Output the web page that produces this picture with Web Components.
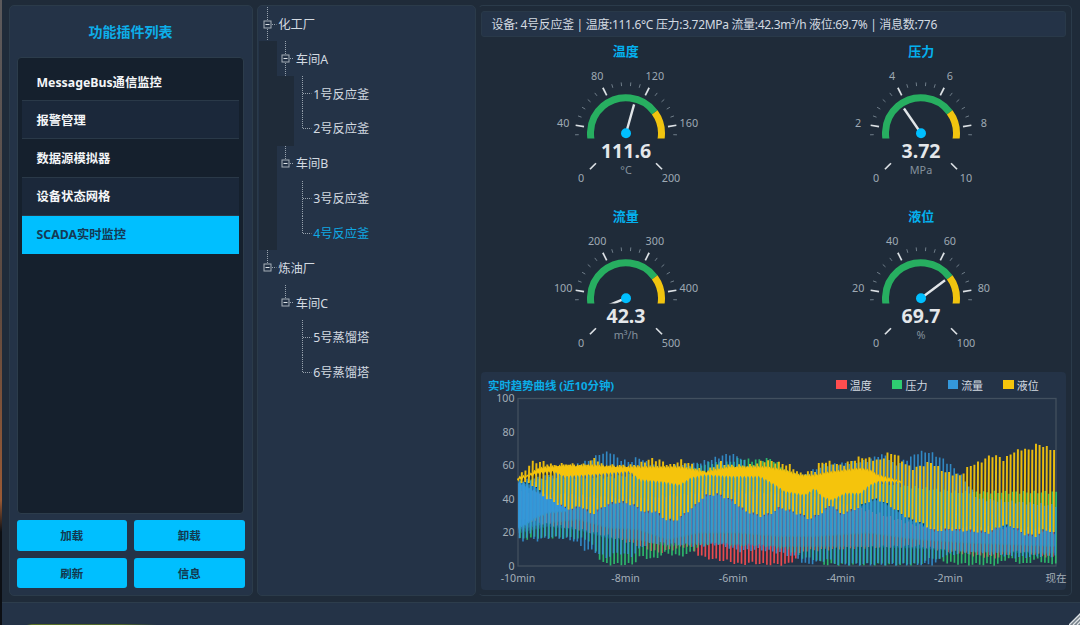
<!DOCTYPE html>
<html lang="zh-CN">
<head>
<meta charset="UTF-8">
<title>SCADA</title>
<style>
    * {
        box-sizing: border-box;
    }
    body {
        margin: 0;
        width: 1080px;
        height: 625px;
        overflow: hidden;
        background: #1f2b39;
        font-family: "Noto Sans", "Noto Sans CJK SC", sans-serif;
        font-size: 12px;
        color: #d3dae1;
    }
</style>
</head>
<body>
<scada-window>
    <plugin-panel slot="left" heading="功能插件列表">
        <plugin-item>MessageBus通信监控</plugin-item>
        <plugin-item alt>报警管理</plugin-item>
        <plugin-item>数据源模拟器</plugin-item>
        <plugin-item alt>设备状态网格</plugin-item>
        <plugin-item active>SCADA实时监控</plugin-item>
        <action-button slot="actions">加载</action-button>
        <action-button slot="actions">卸载</action-button>
        <action-button slot="actions">刷新</action-button>
        <action-button slot="actions">信息</action-button>
    </plugin-panel>
    <device-tree slot="tree"></device-tree>
    <monitor-view slot="main">
        <span slot="info">设备: 4号反应釜 | 温度:111.6°C 压力:3.72MPa 流量:42.3m³/h 液位:69.7% | 消息数:776</span>
        <gauge-dial label="温度" unit="°C" max="200" value="111.6"></gauge-dial>
        <gauge-dial label="压力" unit="MPa" max="10" value="3.72"></gauge-dial>
        <gauge-dial label="流量" unit="m³/h" max="500" value="42.3"></gauge-dial>
        <gauge-dial label="液位" unit="%" max="100" value="69.7"></gauge-dial>
        <trend-chart slot="chart"></trend-chart>
    </monitor-view>
</scada-window>

<script>
class ScadaWindow extends HTMLElement {
    constructor() {
        super();
        this.attachShadow({mode : "open"}).innerHTML = `
<style>
    * { box-sizing: border-box; }
    :host {
        display: grid;
        grid-template-rows: 602px 23px;
        width: 1080px;
        height: 625px;
        background: linear-gradient(#5c5a5c, #5d4a40 300px, #9a5a34 500px, #0c0f14 532px);
        padding-left: 1.5px;
    }
    .body {
        display: grid;
        grid-template-columns: 244px 219px 594px;
        column-gap: 4px;
        background: #1f2b39;
        padding: 5px 7px 6px 7px;
    }
    ::slotted([slot="main"]) { margin-left: -1.5px; margin-right: 1.5px; }
    .status {
        display: flex;
        justify-content: flex-end;
        align-items: flex-end;
        background: linear-gradient(90deg, transparent 25px, #586f25 30px, #4c632b 120px, transparent 155px) 0 100% / 100% 1px no-repeat, #243347;
        border-top: 1px solid #2d3d4c;
    }
    svg { display: block; }
</style>
<div class="body">
    <slot name="left"></slot>
    <slot name="tree"></slot>
    <slot name="main"></slot>
</div>
<div class="status">
    <svg width="12" height="12" viewBox="0 0 12 12">
        <path d="M0 12L12 0V12Z" fill="#75808a"/>
        <path d="M0 12L12 0M4 12L12 4M8 12L12 8" stroke="#dfe3e6" stroke-width="1.3"/>
    </svg>
</div>`;
    }
}

class PluginPanel extends HTMLElement {
    constructor() {
        super();
        this.attachShadow({mode : "open"});
    }

    connectedCallback() {
        this.shadowRoot.innerHTML = `
<style>
    * { box-sizing: border-box; }
    :host {
        display: flex;
        flex-direction: column;
        box-sizing: border-box;
        background: #243347;
        border: 1px solid #2b3b4a;
        border-radius: 5px;
        padding: 0 7px 7px 7px;
    }
    h4 {
        margin: 0;
        height: 51px;
        line-height: 51px;
        text-align: center;
        font-size: 14px;
        font-weight: 700;
        color: #0daee9;
    }
    .list {
        height: 457px;
        margin: 0 1px 0 0;
        background: #15202d;
        border: 1px solid #2c3c4b;
        border-radius: 4px;
        padding: 5px 4px 0 4px;
    }
    .actions {
        display: grid;
        grid-template-columns: 1fr 1fr;
        grid-auto-rows: 30.5px;
        gap: 7px;
        margin-top: 6px;
    }
</style>
<h4>${this.getAttribute("heading")}</h4>
<div class="list"><slot></slot></div>
<div class="actions"><slot name="actions"></slot></div>`;
    }
}

class PluginItem extends HTMLElement {
    constructor() {
        super();
        this.attachShadow({mode : "open"}).innerHTML = `
<style>
    :host {
        display: flex;
        align-items: center;
        box-sizing: border-box;
        height: 38.2px;
        padding-left: 15px;
        border-bottom: 1px solid #2a3948;
        font-size: 12.3px;
        font-weight: 700;
        color: #f4f6f8;
    }
    :host([alt]) { background: #1b283a; }
    :host([active]) {
        background: #00bfff;
        border-color: #00bfff;
        color: #143a55;
    }
</style>
<slot></slot>`;
    }
}

class ActionButton extends HTMLElement {
    constructor() {
        super();
        this.attachShadow({mode : "open"}).innerHTML = `
<style>
    :host {
        display: flex;
        align-items: center;
        justify-content: center;
        background: #00bfff;
        border-radius: 3px;
        color: #12394f;
        font-size: 11.5px;
        font-weight: 700;
    }
</style>
<slot></slot>`;
    }
}

/* open: ancestor levels that still have siblings further down */
const TREE = [
    {name: "化工厂", level: 0},
    {name: "车间A", level: 1, open: [0]},
    {name: "1号反应釜", level: 2, leaf: true, open: [0, 1]},
    {name: "2号反应釜", level: 2, leaf: true, last: true, open: [0, 1]},
    {name: "车间B", level: 1, last: true, open: [0]},
    {name: "3号反应釜", level: 2, leaf: true, open: [0]},
    {name: "4号反应釜", level: 2, leaf: true, last: true, selected: true, open: [0]},
    {name: "炼油厂", level: 0, last: true},
    {name: "车间C", level: 1, last: true},
    {name: "5号蒸馏塔", level: 2, leaf: true},
    {name: "6号蒸馏塔", level: 2, leaf: true, last: true}
];

class DeviceTree extends HTMLElement {
    constructor() {
        super();
        this.attachShadow({mode : "open"});
        this.render();
    }

    branch(node) {
        const end = node.last ? 17.4 : 34.8;
        let s = `<path class="dots" d="M8.5 0V${end}"/>`;
        if (node.leaf) {
            s += `<path class="dots" d="M9 17.5H17.4"/>`;
        } else {
            s += `<path class="dots" d="M13 17.5H17.4"/>
                <rect x="5" y="14" width="7" height="7" fill="#243347" stroke="#a5afb8"/>
                <path d="M6.5 17.5H10.5" stroke="#dde3e8"/>`;
        }
        return `<svg class="cell" width="17.5" height="34.8">${s}</svg>`;
    }

    render() {
        const rows = TREE.map(node => {
            let cells = "";
            for (let i = 0; i < node.level; i++) {
                const dark = (node.open || []).includes(i);
                cells += `<i class="cell ${dark ? "dark" : ""}"></i>`;
            }
            return `<div class="row ${node.selected ? "selected" : ""}">${cells}${this.branch(node)}<span>${node.name}</span></div>`;
        }).join("");

        this.shadowRoot.innerHTML = `
<style>
    * { box-sizing: border-box; }
    :host {
        display: block;
        box-sizing: border-box;
        background: #243347;
        border: 1px solid #2b3b4a;
        border-radius: 5px;
        padding: 0.6px 1px 0 1.5px;
    }
    .row {
        display: flex;
        align-items: center;
        height: 34.83px;
        font-size: 12.3px;
        color: #d3dae1;
    }
    .selected { color: #0fa9e4; }
    .cell {
        flex: none;
        width: 17.5px;
        height: 34.83px;
    }
    .dark { background: #1f2b39; }
    .dots {
        fill: none;
        stroke: #98a3ae;
        stroke-width: 1;
        stroke-dasharray: 1 1;
    }
    span { padding-left: 1.7px; }
    svg { display: block; }
</style>
${rows}`;
    }
}

class MonitorView extends HTMLElement {
    constructor() {
        super();
        this.attachShadow({mode : "open"}).innerHTML = `
<style>
    * { box-sizing: border-box; }
    :host {
        display: flex;
        flex-direction: column;
        box-sizing: border-box;
        border: 1px solid #2b3b4a;
        border-left-color: transparent;
        border-radius: 5px;
        padding: 5px 5px 5px 2px;
    }
    .info {
        height: 26px;
        line-height: 25px;
        padding-left: 9.5px;
        background: #243347;
        border: 1px solid #293949;
        border-radius: 3px;
        white-space: nowrap;
        letter-spacing: -0.32px;
    }
    .gauges {
        display: grid;
        grid-template-columns: 1fr 1fr;
        grid-auto-rows: 165.4px;
        column-gap: 6px;
        height: 335px;
    }
</style>
<div class="info"><slot name="info"></slot></div>
<div class="gauges"><slot></slot></div>
<slot name="chart"></slot>`;
    }
}

class GaugeDial extends HTMLElement {
    constructor() {
        super();
        this.attachShadow({mode : "open"});
    }

    connectedCallback() {
        this.render();
    }

    // fraction 0..1 of the 270 degree sweep to a point on radius r
    point(f, r) {
        const a = (225 - f * 270) * Math.PI / 180;
        return (Math.cos(a) * r).toFixed(2) + " " + (-Math.sin(a) * r).toFixed(2);
    }

    arc(from, to, color) {
        const large = (to - from) * 270 > 180 ? 1 : 0;
        return `<path d="M${this.point(from, 35.5)}A35.5 35.5 0 ${large} 1 ${this.point(to, 35.5)}" fill="none" stroke="${color}" stroke-width="7"/>`;
    }

    render() {
        const max = Number(this.getAttribute("max"));
        const value = this.getAttribute("value");
        let ticks = "";
        let labels = "";
        for (let i = 0; i <= 25; i++) {
            const f = i / 25;
            if (i % 5 == 0) {
                const p = this.point(f, 63.6).split(" ");
                ticks += `<path d="M${this.point(f, 42.5)}L${this.point(f, 51)}" stroke="#dbe0e4" stroke-width="1.7"/>`;
                labels += `<text x="${p[0]}" y="${Number(p[1]) + 3.9}" class="scale">${max * f}</text>`;
            } else if (i > 3 && i < 22) {
                ticks += `<path d="M${this.point(f, 47.3)}L${this.point(f, 51)}" stroke="#6f7d89"/>`;
            }
        }

        this.shadowRoot.innerHTML = `
<style>
    :host {
        display: flex;
        flex-direction: column;
        align-items: center;
    }
    h5 {
        margin: 0;
        height: 28px;
        line-height: 29px;
        font-size: 13px;
        font-weight: 700;
        color: #04b0ee;
    }
    svg { display: block; }
    text { text-anchor: middle; }
    .scale {
        font-size: 10.8px;
        fill: #9ea9b3;
    }
    .value {
        font-size: 19.5px;
        font-weight: 700;
        fill: #e4e7ea;
    }
    .unit {
        font-size: 10.8px;
        fill: #84919d;
    }
</style>
<h5>${this.getAttribute("label")}</h5>
<svg width="180" height="132" viewBox="-90 -68.2 180 132">
    <clipPath id="top"><rect x="-60" y="-60" width="120" height="65.2"/></clipPath>
    ${ticks}
    <g clip-path="url(#top)">
        ${this.arc(0, 0.7, "#27ae60")}
        ${this.arc(0.7, 1, "#f1c40f")}
        <path d="M0 0L${this.point(value / max, 30)}" stroke="#e1e5e8" stroke-width="2.4"/>
    </g>
    <circle r="5" fill="#00bfff"/>
    ${labels}
    <text x="0" y="25" class="value">${value}</text>
    <text x="0" y="41" class="unit">${this.getAttribute("unit")}</text>
</svg>`;
    }
}

const LEVEL_LOW = [[0,51],[17,48],[27,41],[37,38],[47,35],[55,34],[62,36],[74,31],[87,36],[97,38],[107,38],[117,36],[127,32],[137,33],[147,28],[157,27],[162,29],[177,36],[187,42],[199,43],[212,40],[227,33],[242,30],[252,31],[262,35],[272,33],[282,31],[292,28],[304,32],[314,37],[322,31],[337,34],[352,39],[360,40],[372,36],[382,32],[392,28],[402,26],[417,21],[432,22],[452,21],[472,20],[482,24],[494,24],[507,19],[519,18],[527,22],[538,19]];

const SERIES = [
    {
        name: "温度", color: "#ff4d4f", phase: 2.9, width: 1.7, opacity: 0.9,
        high: [[0,45],[60,42],[120,40],[200,45],[300,42],[400,24],[538,22]],
        low: [[0,28],[60,22],[90,18],[122,12],[140,8],[155,10],[170,12],[182,6],[195,4],[210,3],[222,1],[236,2],[245,1],[270,1],[277,4],[285,9],[340,11],[400,12],[430,9],[460,6],[478,5],[500,9],[525,6],[538,5]]
    },
    {
        name: "压力", color: "#2ecc71", phase: 2.2, width: 1.7, opacity: 0.85,
        high: [[0,50],[40,53],[90,53],[150,56],[180,60],[197,62],[205,61],[222,64],[235,63],[252,64],[262,60],[272,55],[310,52],[340,52],[380,48],[440,44],[538,44]],
        low: [[0,16],[20,17],[50,17],[70,16],[78,9],[84,2],[92,1],[115,1],[123,6],[135,4],[148,8],[160,6],[170,7],[182,12],[200,14],[218,12],[235,13],[250,12],[270,10],[285,5],[298,4],[305,1],[320,1],[400,1],[415,5],[430,2],[450,1],[480,1],[490,5],[505,1],[520,4],[530,1],[538,2]]
    },
    {
        name: "流量", color: "#3498db", phase: 1.6, width: 1.6, opacity: 0.85,
        high: [[0,50],[30,54],[50,58],[60,61],[72,63],[82,67],[93,68],[100,64],[112,62],[120,65],[128,62],[145,58],[160,60],[175,61],[190,63],[211,67],[222,65],[230,60],[260,56],[285,54],[305,60],[320,61],[340,62],[350,63],[360,66],[368,66],[376,60],[390,64],[401,68],[411,68],[424,64],[433,60],[443,54],[460,40],[538,36]],
        low: [[0,18],[3,14],[12,19],[18,15],[30,17],[40,17],[58,15],[66,10],[76,9],[88,5],[100,8],[115,6],[125,12],[140,14],[160,13],[180,12],[200,13],[222,9],[240,10],[262,8],[280,5],[286,1],[298,2],[310,4],[320,1],[360,1],[400,1],[417,1],[425,6],[445,8],[480,7],[500,5],[520,6],[538,6]],
        bands: [
            {opacity: 0.4, top: LEVEL_LOW, bottom: [[0,22],[30,26],[60,28],[90,23],[120,22],[150,16],[180,20],[220,20],[260,18],[300,18],[350,20],[400,16],[450,14],[538,12]]},
            {opacity: 0.35, top: LEVEL_LOW, bottom: [[0,20],[30,24],[60,22],[90,17],[120,16],[150,12],[180,14],[260,12],[350,12],[400,11],[450,9],[538,8]]},
            {opacity: 0.85, top: [[0,50],[8,48],[20,44],[30,42],[50,34]], bottom: [[0,23],[8,25],[18,29],[30,32],[50,33]]}
        ]
    },
    {
        name: "液位", color: "#f5c40c", phase: 0.1, width: 1.95, opacity: 0.95,
        high: [[0,53],[7,57],[13,62],[27,62],[35,60],[47,61],[62,60],[72,62],[77,65],[84,60],[112,60],[122,61],[132,64],[142,63],[152,60],[162,63],[172,61],[187,56],[202,62],[212,60],[232,60],[247,63],[257,62],[272,60],[282,55],[297,57],[302,62],[312,62],[322,60],[327,61],[342,65],[362,63],[369,67],[377,67],[387,61],[394,58],[404,60],[412,62],[427,56],[442,54],[452,60],[462,62],[472,66],[482,65],[486,63],[492,67],[504,70],[512,69],[519,73],[532,70],[538,69]],
        low: LEVEL_LOW,
        bands: [
            {opacity: 1, top: [[0,53],[10,54],[20,58],[27,59],[47,60],[72,60],[112,59],[142,59],[162,59],[187,56],[212,59],[247,59],[267,57],[282,54],[297,54],[312,56],[342,58],[352,57],[360,54],[378,51],[385,50]],
             bottom: [[0,51],[10,53],[20,55],[35,56],[47,53],[72,54],[112,56],[122,51],[142,50],[162,48],[172,52],[187,54],[212,53],[242,53],[257,48],[267,44],[287,42],[297,46],[304,41],[314,39],[327,43],[342,43],[352,48],[360,50],[378,50],[385,49]]}
        ]
    }
];

const PLOT_W = 538;
const PLOT_H = 167.5;
const CYCLE = 3.62;

class TrendChart extends HTMLElement {
    constructor() {
        super();
        this.attachShadow({mode : "open"});
        this.render();
    }

    valueAt(points, x) {
        for (let i = 1; i < points.length; i++) {
            if (x <= points[i][0]) {
                const [x0, v0] = points[i - 1];
                const [x1, v1] = points[i];
                return v0 + (v1 - v0) * (x - x0) / (x1 - x0);
            }
        }
        return points[points.length - 1][1];
    }

    y(v) {
        return (PLOT_H - Math.max(0, v) / 100 * PLOT_H).toFixed(1);
    }

    strokes(series, n) {
        let d = "";
        for (let k = 0; k < PLOT_W / CYCLE; k++) {
            const x = k * CYCLE + series.phase;
            if (x > PLOT_W) break;
            const high = this.valueAt(series.high, x) + Math.sin(k * 2.3 + n * 1.7) * 0.9;
            const low = this.valueAt(series.low, x) + Math.sin(k * 1.9 + n) * 0.8;
            d += `M${(x + 0.2).toFixed(1)} ${this.y(high)}L${(x - 0.2).toFixed(1)} ${this.y(low)}`;
        }
        return `<path d="${d}" stroke="${series.color}" stroke-width="${series.width}" stroke-opacity="${series.opacity}"/>`;
    }

    // filled area with a toothed edge
    band(series, area) {
        const end = area.bottom[area.bottom.length - 1][0];
        const top = [];
        const bottom = [];
        for (let x = 0, k = 0; x <= end; x += CYCLE / 2, k++) {
            const tooth = k % 2 ? 0.9 : -0.9;
            top.push(x.toFixed(1) + "," + this.y(this.valueAt(area.top, x) + tooth));
            bottom.unshift(x.toFixed(1) + "," + this.y(this.valueAt(area.bottom, x) + tooth));
        }
        return `<polygon points="${top.concat(bottom).join(" ")}" fill="${series.color}" fill-opacity="${area.opacity}"/>`;
    }

    render() {
        const legend = SERIES.map(s => `<span class="key"><i style="background:${s.color}"></i>${s.name}</span>`).join("");
        const yLabels = [100, 80, 60, 40, 20, 0].map(v =>
            `<text x="-3.5" y="${PLOT_H - v / 100 * PLOT_H + 3.8}" text-anchor="end">${v}</text>`).join("");
        const xLabels = ["-10min", "-8min", "-6min", "-4min", "-2min", "现在"].map((t, i) =>
            `<text x="${i * PLOT_W / 5}" y="183.4" text-anchor="middle">${t}</text>`).join("");
        const plots = SERIES.map((s, n) =>
            this.strokes(s, n) + (s.bands || []).map(area => this.band(s, area)).join("")).join("");

        this.shadowRoot.innerHTML = `
<style>
    :host {
        display: block;
        box-sizing: border-box;
        height: 218px;
        background: #243347;
        border-radius: 4px;
    }
    header {
        display: flex;
        justify-content: space-between;
        align-items: center;
        height: 25px;
        padding: 0 7px 0 7px;
    }
    b {
        font-size: 11.4px;
        color: #0bade8;
    }
    .legend {
        display: grid;
        grid-template-columns: repeat(4, 55.7px);
    }
    .key {
        display: flex;
        align-items: center;
        gap: 3px;
        font-size: 11px;
    }
    .key i {
        width: 10.5px;
        height: 9px;
    }
    svg {
        display: block;
        overflow: visible;
    }
    text {
        font-size: 10.6px;
        fill: #a3aeb8;
    }
</style>
<header><b>实时趋势曲线 (近10分钟)</b><div class="legend">${legend}</div></header>
<svg width="585" height="190" viewBox="-37 -1.5 585 190">
    <rect x="0" y="0" width="${PLOT_W}" height="${PLOT_H}" fill="none" stroke="#42505f" stroke-width="1.3"/>
    ${plots}
    ${yLabels}
    ${xLabels}
</svg>`;
    }
}

customElements.define("scada-window", ScadaWindow);
customElements.define("plugin-panel", PluginPanel);
customElements.define("plugin-item", PluginItem);
customElements.define("action-button", ActionButton);
customElements.define("device-tree", DeviceTree);
customElements.define("monitor-view", MonitorView);
customElements.define("gauge-dial", GaugeDial);
customElements.define("trend-chart", TrendChart);
</script>
</body>
</html>
